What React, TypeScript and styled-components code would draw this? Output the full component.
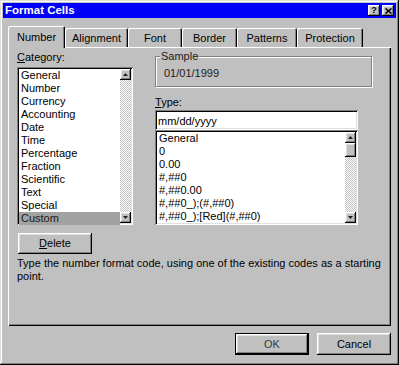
import styled, { createGlobalStyle } from "styled-components";

const GlobalStyle = createGlobalStyle`
  html, body {
    margin: 0;
    padding: 0;
    background: #c0c0c0;
  }
  body {
    font-family: "Liberation Sans", Arial, sans-serif;
    font-size: 11px;
    color: #000;
  }
  * {
    box-sizing: border-box;
  }
`;

const raised = `
  background: #c0c0c0;
  box-shadow: inset -1px -1px #000, inset 1px 1px #fff, inset -2px -2px #808080, inset 2px 2px #dfdfdf;
`;

const sunken = `
  background: #fff;
  box-shadow: inset 1px 1px #808080, inset -1px -1px #fff, inset 2px 2px #000, inset -2px -2px #dfdfdf;
`;

const Window = styled.div`
  width: 399px;
  height: 365px;
  padding: 3px;
  display: flex;
  flex-direction: column;
  background: #c0c0c0;
  box-shadow: inset -1px -1px #000, inset 1px 1px #dfdfdf, inset -2px -2px #808080,
    inset 2px 2px #fff;
`;

const TitleBar = styled.div`
  height: 15px;
  background: #0000f8;
  display: flex;
  align-items: center;
  padding: 0 2px;
`;

const Title = styled.div`
  flex: 1;
  color: #fff;
  font-weight: bold;
  font-size: 11.5px;
  line-height: 15px;
`;

const TitleButtons = styled.div`
  display: flex;
  gap: 2px;
`;

const TitleButton = styled.div`
  ${raised};
  width: 12px;
  height: 11px;
  display: flex;
  align-items: center;
  justify-content: center;
  font-weight: bold;
  font-size: 9px;
  line-height: 11px;
`;

const Body = styled.div`
  padding: 8px 5px 0 5px;
  display: flex;
  flex-direction: column;
`;

const TabRow = styled.div`
  height: 21px;
  display: flex;
  align-items: flex-end;
`;

const Tab = styled.div<{ $active?: boolean; $w: number }>`
  width: ${(p) => p.$w}px;
  height: ${(p) => (p.$active ? 22 : 19)}px;
  margin-bottom: ${(p) => (p.$active ? -1 : 0)}px;
  padding-top: ${(p) => (p.$active ? 0 : 1)}px;
  display: flex;
  align-items: center;
  justify-content: center;
  background: #c0c0c0;
  border-top-left-radius: 2px;
  border-top-right-radius: 2px;
  box-shadow: inset 1px 1px #fff, inset -1px 0 #000, inset -2px 0 #808080;
  position: relative;
  z-index: ${(p) => (p.$active ? 1 : 0)};
`;

const Panel = styled.div`
  height: 279px;
  padding: 4px 9px 0 9px;
  background: #c0c0c0;
  box-shadow: inset 1px 1px #fff, inset -1px -1px #000, inset -2px -2px #808080;
  display: flex;
  flex-direction: column;
`;

const Columns = styled.div`
  display: flex;
  gap: 22px;
`;

const LeftColumn = styled.div`
  width: 116px;
  display: flex;
  flex-direction: column;
`;

const RightColumn = styled.div`
  width: 217px;
  display: flex;
  flex-direction: column;
`;

const Label = styled.div`
  line-height: 13px;
  height: 13px;
  margin-bottom: 3px;
`;

const Key = styled.span`
  text-decoration: underline;
`;

const ListBox = styled.div<{ $h: number; $w?: number }>`
  ${sunken};
  height: ${(p) => p.$h}px;
  width: ${(p) => (p.$w ? `${p.$w}px` : "auto")};
  padding: 2px;
  display: flex;
`;

const Items = styled.div`
  flex: 1;
  display: flex;
  flex-direction: column;
`;

const Item = styled.div<{ $selected?: boolean }>`
  height: 13px;
  line-height: 13px;
  padding: 0 2px;
  white-space: nowrap;
  background: ${(p) => (p.$selected ? "#a2a2a2" : "transparent")};
  color: ${(p) => (p.$selected ? "#1a1a1a" : "#000")};
`;

const ScrollBar = styled.div`
  width: 11px;
  display: flex;
  flex-direction: column;
  background-color: #fff;
  background-image: conic-gradient(#c0c0c0 25%, #fff 0 50%, #c0c0c0 0 75%, #fff 0);
  background-size: 2px 2px;
`;

const ScrollButton = styled.div<{ $h?: number }>`
  ${raised};
  height: ${(p) => p.$h ?? 11}px;
  display: flex;
  align-items: center;
  justify-content: center;
`;

const Track = styled.div`
  flex: 1;
`;

const GroupBox = styled.fieldset`
  margin: 0;
  padding: 6px 8px 0 8px;
  height: 36px;
  min-width: 0;
  border: 1px solid #808080;
  box-shadow: inset 1px 1px #fff, 1px 1px #fff;
  line-height: 13px;
  color: #202020;
`;

const Legend = styled.legend`
  margin-left: -4px;
  padding: 0 1px;
  line-height: 10px;
  background: #c0c0c0;
`;

const TypeLabel = styled(Label)`
  margin-top: 9px;
  margin-bottom: 1px;
`;

const TextField = styled.input`
  ${sunken};
  width: 203px;
  height: 20px;
  border: none;
  outline: none;
  padding: 2px 3px 0 3px;
  font-family: "Liberation Sans", Arial, sans-serif;
  font-size: 11px;
  color: #000;
`;

const Button = styled.div<{ $default?: boolean; $w?: number; $h?: number }>`
  ${raised};
  width: ${(p) => p.$w ?? 74}px;
  height: ${(p) => p.$h ?? 22}px;
  display: flex;
  align-items: center;
  justify-content: center;
  line-height: 13px;
  ${(p) =>
    p.$default &&
    `
    box-shadow: inset 0 0 0 1px #000, inset -2px -2px #000, inset 2px 2px #fff,
      inset -3px -3px #808080, inset 3px 3px #dfdfdf;
    color: #3a3a3a;
  `}
`;

const DeleteButton = styled(Button)`
  margin-top: 8px;
  margin-left: 1px;
`;

const Hint = styled.div`
  margin-top: 3px;
  line-height: 13px;
  white-space: nowrap;
`;

const Footer = styled.div`
  display: flex;
  justify-content: flex-end;
  gap: 8px;
  margin-top: 7px;
`;

const UpArrow = () => (
  <svg width="5" height="3" viewBox="0 0 5 3">
    <polygon points="2.5,0 5,3 0,3" fill="#202020" />
  </svg>
);

const DownArrow = () => (
  <svg width="5" height="3" viewBox="0 0 5 3">
    <polygon points="0,0 5,0 2.5,3" fill="#202020" />
  </svg>
);

const CloseGlyph = () => (
  <svg width="7" height="6" viewBox="0 0 7 6">
    <path d="M0.5 0.5 L6.5 5.5 M6.5 0.5 L0.5 5.5" stroke="#000" strokeWidth="1.6" />
  </svg>
);

const categories = [
  "General",
  "Number",
  "Currency",
  "Accounting",
  "Date",
  "Time",
  "Percentage",
  "Fraction",
  "Scientific",
  "Text",
  "Special",
  "Custom",
];

const formats = [
  "General",
  "0",
  "0.00",
  "#,##0",
  "#,##0.00",
  "#,##0_);(#,##0)",
  "#,##0_);[Red](#,##0)",
];

const tabs = [
  { label: "Number", w: 57, active: true },
  { label: "Alignment", w: 63 },
  { label: "Font", w: 54 },
  { label: "Border", w: 55 },
  { label: "Patterns", w: 60 },
  { label: "Protection", w: 66 },
];

function App() {
  return (
    <>
      <GlobalStyle />
      <Window>
        <TitleBar>
          <Title>Format Cells</Title>
          <TitleButtons>
            <TitleButton>?</TitleButton>
            <TitleButton>
              <CloseGlyph />
            </TitleButton>
          </TitleButtons>
        </TitleBar>

        <Body>
          <TabRow>
            {tabs.map((t) => (
              <Tab key={t.label} $w={t.w} $active={t.active}>
                {t.label}
              </Tab>
            ))}
          </TabRow>

          <Panel>
            <Columns>
              <LeftColumn>
                <Label>
                  <Key>C</Key>ategory:
                </Label>
                <ListBox $h={158}>
                  <Items>
                    {categories.map((c) => (
                      <Item key={c} $selected={c === "Custom"}>
                        {c}
                      </Item>
                    ))}
                  </Items>
                  <ScrollBar>
                    <ScrollButton>
                      <UpArrow />
                    </ScrollButton>
                    <Track />
                    <ScrollButton>
                      <DownArrow />
                    </ScrollButton>
                  </ScrollBar>
                </ListBox>
              </LeftColumn>

              <RightColumn>
                <GroupBox>
                  <Legend>Sample</Legend>
                  01/01/1999
                </GroupBox>
                <TypeLabel>
                  <Key>T</Key>ype:
                </TypeLabel>
                <TextField readOnly value="mm/dd/yyyy" />
                <ListBox $h={95} $w={203}>
                  <Items>
                    {formats.map((f) => (
                      <Item key={f}>{f}</Item>
                    ))}
                  </Items>
                  <ScrollBar>
                    <ScrollButton>
                      <UpArrow />
                    </ScrollButton>
                    <ScrollButton $h={14} />
                    <Track />
                    <ScrollButton>
                      <DownArrow />
                    </ScrollButton>
                  </ScrollBar>
                </ListBox>
              </RightColumn>
            </Columns>

            <DeleteButton $h={21}>
              <span>
                <Key>D</Key>elete
              </span>
            </DeleteButton>

            <Hint>
              Type the number format code, using one of the existing codes as a starting
              <br />
              point.
            </Hint>
          </Panel>

          <Footer>
            <Button $default>OK</Button>
            <Button>Cancel</Button>
          </Footer>
        </Body>
      </Window>
    </>
  );
}

export default App;
